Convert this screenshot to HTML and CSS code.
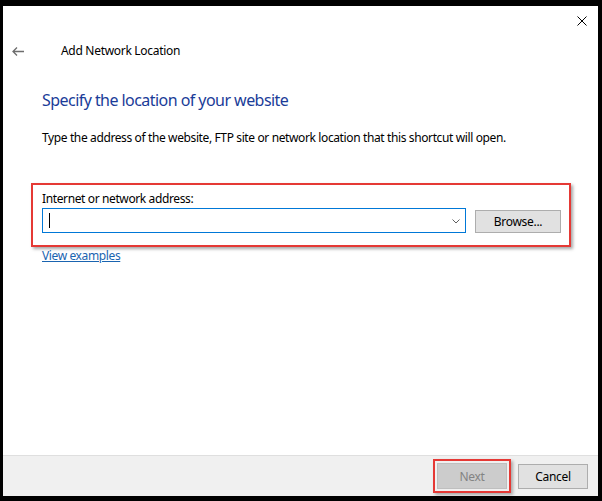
FILE: index.html
```html
<!DOCTYPE html>
<html lang="en">

<head>
    <meta charset="UTF-8">
    <title>Add Network Location</title>
    <link rel="stylesheet" href="styles.css">
</head>

<body>
    <div class="window">
        <!-- Barra de título -->
        <div class="titlebar">
            <svg class="close" width="10" height="10" viewBox="0 0 10 10">
                <path d="M0.5 0.5 L9.5 9.5 M9.5 0.5 L0.5 9.5" stroke="#000" stroke-width="1" fill="none" />
            </svg>
        </div>

        <div class="nav">
            <svg class="back" width="12" height="9" viewBox="0 0 12 9">
                <path d="M1 4.5 H12 M5 0.5 L1 4.5 L5 8.5" stroke="#6d6d6d" stroke-width="1.3" fill="none" />
            </svg>
            <span class="nav-title">Add Network Location</span>
        </div>

        <!-- Contenido -->
        <div class="content">
            <h1 class="instruction">Specify the location of your website</h1>
            <p class="description">Type the address of the website, FTP site or network location that this shortcut will open.</p>

            <div class="address-group">
                <label class="address-label">Internet or network address:</label>
                <div class="address-row">
                    <div class="combo">
                        <span class="caret"></span>
                        <svg class="chevron" width="8" height="5" viewBox="0 0 8 5">
                            <polyline points="0.5,0.5 4,4 7.5,0.5" stroke="#606060" stroke-width="1" fill="none" />
                        </svg>
                    </div>
                    <button class="btn browse">Browse...</button>
                </div>
            </div>
            <a class="link" href="#">View examples</a>
        </div>

        <!-- Pie -->
        <div class="footer">
            <div class="next-mark">
                <button class="btn next" disabled>Next</button>
            </div>
            <button class="btn cancel">Cancel</button>
        </div>
    </div>
</body>

</html>
```

FILE: styles.css
```css
body {
    margin: 0;
    background-color: #000;
    font-family: "Noto Sans", "Liberation Sans", sans-serif;
    font-size: 12px;
    letter-spacing: -0.38px;
    color: #000;
}

.window {
    margin: 6px 4px 5px 3px;
    height: 490px;
    background-color: #fff;
    display: flex;
    flex-direction: column;
}

/* Barra de título */
.titlebar {
    height: 31px;
    display: flex;
    justify-content: flex-end;
    padding: 10px 11px 0 0;
    box-sizing: border-box;
}

.nav {
    display: flex;
    align-items: center;
    padding: 6px 0 0 9px;
    height: 16px;
}

.back {
    margin-right: 37px;
}

.nav-title {
    line-height: 16px;
    letter-spacing: -0.3px;
}

/* Contenido */
.content {
    flex: 1;
    padding-left: 39px;
}

.instruction {
    margin: 30px 0 0 0;
    font-size: 16px;
    line-height: 22px;
    font-weight: normal;
    letter-spacing: -0.55px;
    color: #1a3c98;
}

.description {
    margin: 19px 0 0 0;
    line-height: 16px;
}

.address-group {
    margin: 37px 0 0 -11px;
    width: 540px;
    box-sizing: border-box;
    border: 2px solid #e53935;
    padding: 6px 8px 12px 9px;
    box-shadow: 2px 2px 3px rgba(0, 0, 0, 0.35);
}

.address-label {
    display: block;
    line-height: 16px;
}

.address-row {
    display: flex;
    align-items: flex-start;
    gap: 9px;
    margin-top: 1px;
}

.combo {
    flex: 1;
    height: 25px;
    box-sizing: border-box;
    border: 1px solid #0078d7;
    display: flex;
    align-items: center;
    justify-content: space-between;
    padding: 0 5px 0 6px;
}

.caret {
    width: 1px;
    height: 15px;
    background-color: #000;
}

.chevron {
    margin-top: 1px;
}

.btn {
    font-family: "Noto Sans", "Liberation Sans", sans-serif;
    font-size: 12px;
    letter-spacing: -0.3px;
    color: #000;
    background-color: #e1e1e1;
    border: 1px solid #adadad;
    padding: 0;
    box-sizing: border-box;
}

.browse {
    width: 86px;
    height: 23px;
    margin-top: 2px;
}

.link {
    display: inline-block;
    margin-top: -4px;
    line-height: 16px;
    color: #1a64b0;
}

/* Pie */
.footer {
    height: 41px;
    box-sizing: border-box;
    border-top: 1px solid #dfdfdf;
    background-color: #f0f0f0;
    display: flex;
    align-items: center;
    justify-content: flex-end;
    gap: 7px;
    padding-right: 10px;
}

.next-mark {
    border: 2px solid #e53935;
    padding: 2px;
    box-shadow: 2px 2px 3px rgba(0, 0, 0, 0.3);
    display: flex;
}

.next {
    width: 70px;
    height: 26px;
    background-color: #cccccc;
    border-color: #bfbfbf;
    color: #838383;
}

.cancel {
    width: 70px;
    height: 25px;
}
```
